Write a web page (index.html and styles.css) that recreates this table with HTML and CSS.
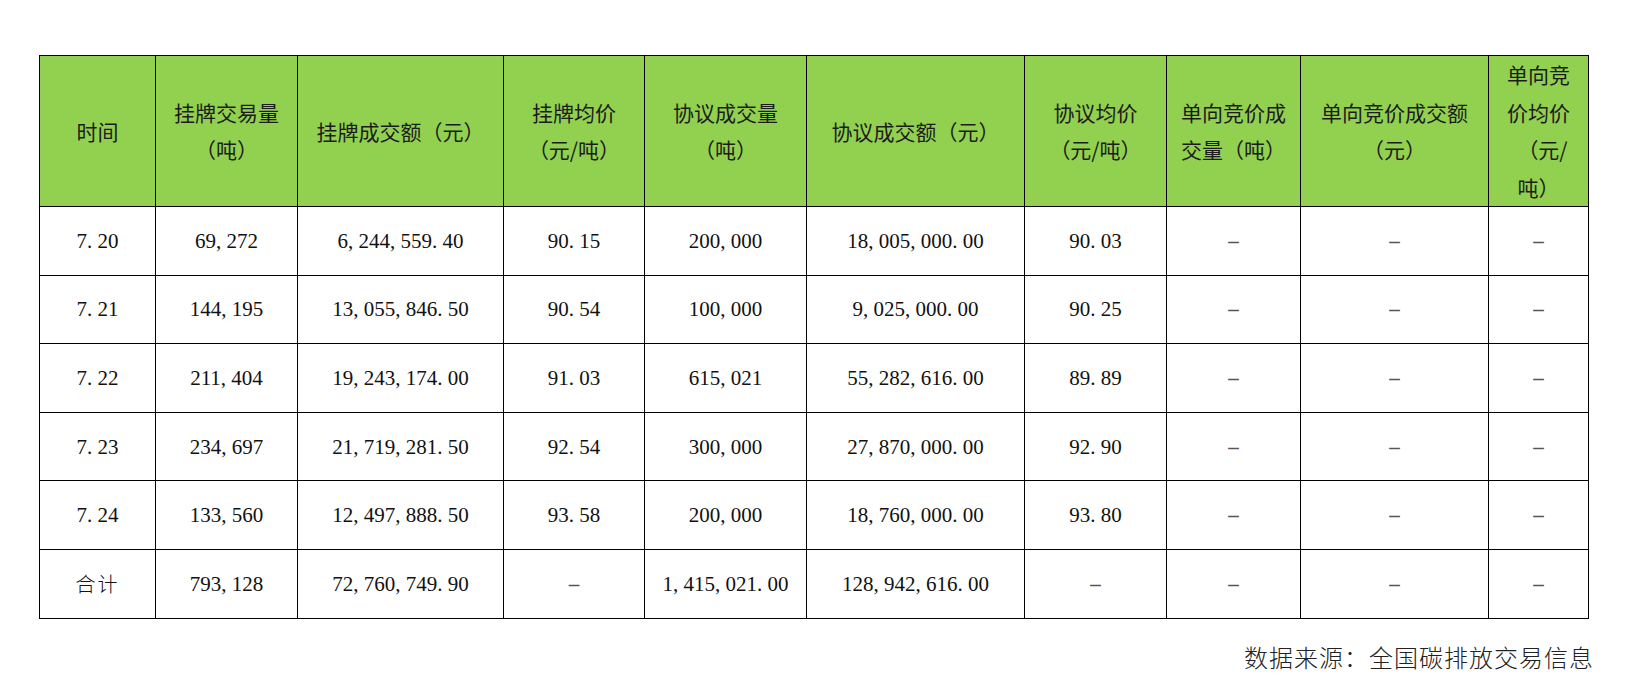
FILE: index.html
```html
<!DOCTYPE html>
<html lang="zh-CN">
<head>
<meta charset="utf-8">
<title>全国碳市场交易数据</title>
<link rel="stylesheet" href="styles.css">
</head>
<body>
<div class="page">
  <table class="trade">
    <colgroup>
      <col class="c1"><col class="c2"><col class="c3"><col class="c4"><col class="c5">
      <col class="c6"><col class="c7"><col class="c8"><col class="c9"><col class="c10">
    </colgroup>
    <thead>
      <tr>
        <th>时间</th>
        <th>挂牌交易量<br>（吨）</th>
        <th>挂牌成交额（元）</th>
        <th>挂牌均价<br>（元/吨）</th>
        <th>协议成交量<br>（吨）</th>
        <th>协议成交额（元）</th>
        <th>协议均价<br>（元/吨）</th>
        <th>单向竞价成<br>交量（吨）</th>
        <th>单向竞价成交额<br>（元）</th>
        <th class="narrow">单向竞<br>价均价<br><span class="indent">（元/</span><br>吨）</th>
      </tr>
    </thead>
    <tbody>
      <tr>
        <td>7. 20</td><td>69, 272</td><td>6, 244, 559. 40</td><td>90. 15</td><td>200, 000</td>
        <td>18, 005, 000. 00</td><td>90. 03</td><td class="dash">–</td><td class="dash">–</td><td class="dash">–</td>
      </tr>
      <tr>
        <td>7. 21</td><td>144, 195</td><td>13, 055, 846. 50</td><td>90. 54</td><td>100, 000</td>
        <td>9, 025, 000. 00</td><td>90. 25</td><td class="dash">–</td><td class="dash">–</td><td class="dash">–</td>
      </tr>
      <tr>
        <td>7. 22</td><td>211, 404</td><td>19, 243, 174. 00</td><td>91. 03</td><td>615, 021</td>
        <td>55, 282, 616. 00</td><td>89. 89</td><td class="dash">–</td><td class="dash">–</td><td class="dash">–</td>
      </tr>
      <tr>
        <td>7. 23</td><td>234, 697</td><td>21, 719, 281. 50</td><td>92. 54</td><td>300, 000</td>
        <td>27, 870, 000. 00</td><td>92. 90</td><td class="dash">–</td><td class="dash">–</td><td class="dash">–</td>
      </tr>
      <tr>
        <td>7. 24</td><td>133, 560</td><td>12, 497, 888. 50</td><td>93. 58</td><td>200, 000</td>
        <td>18, 760, 000. 00</td><td>93. 80</td><td class="dash">–</td><td class="dash">–</td><td class="dash">–</td>
      </tr>
      <tr>
        <td class="cjk">合计</td><td>793, 128</td><td>72, 760, 749. 90</td><td class="dash">–</td><td>1, 415, 021. 00</td>
        <td>128, 942, 616. 00</td><td class="dash">–</td><td class="dash">–</td><td class="dash">–</td><td class="dash">–</td>
      </tr>
    </tbody>
  </table>
  <p class="source">数据来源：全国碳排放交易信息</p>
</div>
</body>
</html>
```
FILE: styles.css
```css
html, body {
  margin: 0;
  padding: 0;
  background: #ffffff;
}

.page {
  width: 1629px;
  height: 687px;
  box-sizing: border-box;
  padding: 55px 0 0 39px;
  overflow: hidden;
}

.trade {
  border-collapse: collapse;
  table-layout: fixed;
  width: 1549px;
}

.c1 { width: 116px; }
.c2 { width: 142px; }
.c3 { width: 206px; }
.c4 { width: 141px; }
.c5 { width: 162px; }
.c6 { width: 218px; }
.c7 { width: 142px; }
.c8 { width: 134px; }
.c9 { width: 188px; }
.c10 { width: 100px; }

.trade th,
.trade td {
  border: 1px solid #000;
  padding: 0;
  text-align: center;
  vertical-align: middle;
}

.trade th {
  height: 150px;
  background: #92d050;
  color: #1c1c1c;
  font-family: "Noto Sans CJK SC", "Noto Sans", sans-serif;
  font-weight: 400;
  font-size: 21px;
  line-height: 37px;
  white-space: nowrap;
}

.trade th.narrow {
  line-height: 37.5px;
}

.indent {
  padding-left: 8px;
}

.trade td {
  height: 67.6px;
  color: #111;
  font-family: "Liberation Serif", "Times New Roman", serif;
  font-size: 21px;
  line-height: 22px;
  white-space: pre;
}

.trade td.cjk {
  font-family: "Noto Sans CJK SC", sans-serif;
  font-size: 20px;
  font-weight: 300;
  letter-spacing: 2px;
}

.trade td.dash {
  color: #555;
  font-weight: 700;
}

.source {
  margin: 26px 35px 0 0;
  text-align: right;
  font-family: "Noto Sans CJK SC", sans-serif;
  font-size: 24px;
  font-weight: 300;
  line-height: 24px;
  letter-spacing: 1px;
  color: #222;
}
```
